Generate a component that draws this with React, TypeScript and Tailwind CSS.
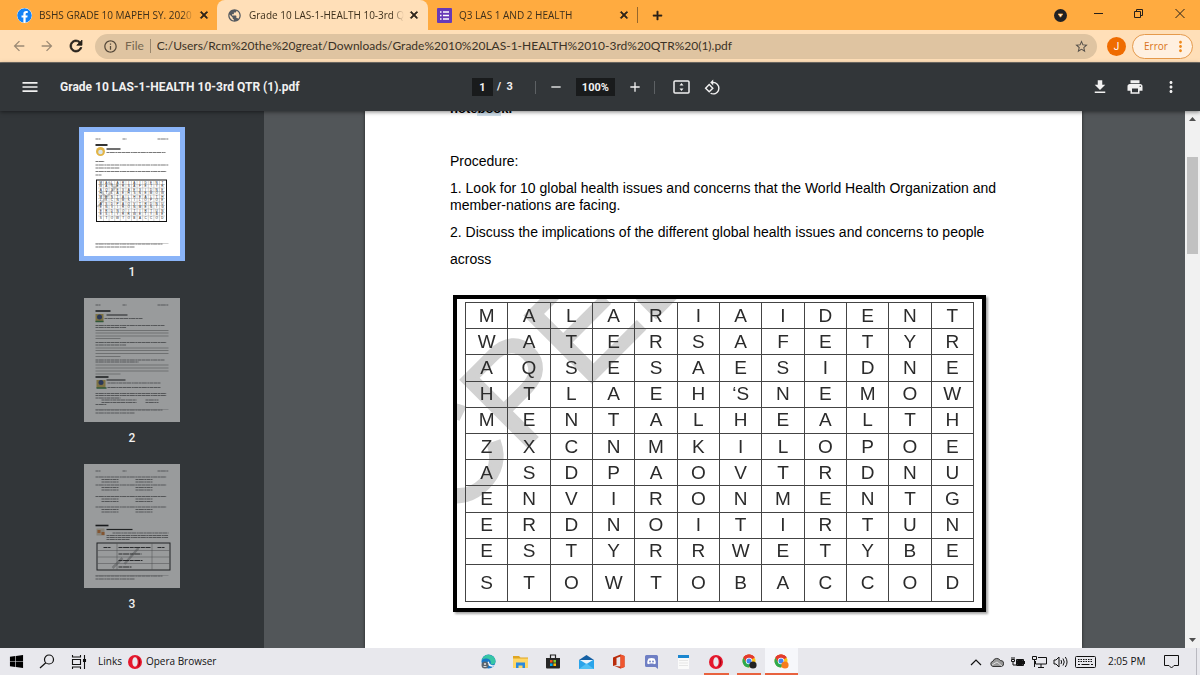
import type { ReactNode } from "react";
import {
  MdAdd,
  MdArrowBack,
  MdArrowForward,
  MdClose,
  MdInfoOutline,
  MdMenu,
  MdMoreVert,
  MdPrint,
  MdPublic,
  MdRefresh,
  MdRemove,
  MdRotate90DegreesCcw,
  MdStarBorder,
} from "react-icons/md";
import { FaFacebook, FaWindows } from "react-icons/fa";

const grid = [
  "M A L A R I A I D E N T",
  "W A T E R S A F E T Y R",
  "A Q S E S A E S I D N E",
  "H T L A E H ‘S N E M O W",
  "M E N T A L H E A L T H",
  "Z X C N M K I L O P O E",
  "A S D P A O V T R D N U",
  "E N V I R O N M E N T G",
  "E R D N O I T I R T U N",
  "E S T Y R R W E T Y B E",
  "S T O W T O B A C C O D",
].map((row) => row.split(" "));

/* ---------- browser ---------- */

function Tab({ icon, title, active, className }: { icon: ReactNode; title: string; active?: boolean; className: string }) {
  return (
    <div className={`flex items-center ${active ? "rounded-t-lg bg-[#ffdfb8]" : ""} ${className}`}>
      <button role="tab" aria-selected={!!active} className="flex min-w-0 flex-1 items-center gap-[7px] text-left">
        <span className="shrink-0">{icon}</span>
        <span className="flex-1 overflow-hidden whitespace-nowrap text-[10px] leading-[16px] text-[#3d2f1b] [mask-image:linear-gradient(to_right,black_92%,transparent)]">
          {title}
        </span>
      </button>
      <button aria-label="Close tab" className="ml-1 shrink-0 text-[#2a2118]">
        <MdClose size={12} className="[&_path:last-child]:stroke-2" />
      </button>
    </div>
  );
}

function TabStrip() {
  return (
    <div className="flex h-[30px] shrink-0 items-center bg-[#ffab40]">
      <div role="tablist" className="flex h-full">
        <Tab
          className="w-[217px] pl-[17px] pr-[7px]"
          title="BSHS GRADE 10 MAPEH SY. 2020"
          icon={<FaFacebook size={15} className="rounded-full bg-white text-[#1583f5]" />}
        />
        <Tab
          active
          className="w-[211px] pl-[10px] pr-[8px]"
          title="Grade 10 LAS-1-HEALTH 10-3rd QTR"
          icon={<MdPublic size={15} className="text-[#555a60]" />}
        />
        <Tab
          className="w-[209px] pl-[9px] pr-[7px]"
          title="Q3 LAS 1 AND 2 HEALTH"
          icon={
            <svg width="15" height="15" viewBox="0 0 15 15">
              <rect width="15" height="15" rx="1" fill="#673ab7" />
              <path d="M3 4h1.5M6 4h6M3 7.5h1.5M6 7.5h6M3 11h1.5M6 11h6" stroke="#fff" strokeWidth="1.6" />
            </svg>
          }
        />
      </div>
      <span className="h-4 w-px bg-[#96672c]" />
      <button aria-label="New tab" className="ml-3 text-[#2a2118]">
        <MdAdd size={15} className="[&_path:last-child]:stroke-1" />
      </button>
      <div className="ml-auto flex items-center pr-[15px] text-[#26201a]">
        <button aria-label="Search tabs" className="mr-[27px]">
          <svg width="13" height="13" viewBox="0 0 13 13">
            <circle cx="6.5" cy="6.5" r="6.5" fill="#202124" />
            <path d="M4.2 5h4.6L6.5 8.2z" fill="#fff" stroke="#ffab40" strokeWidth=".8" />
          </svg>
        </button>
        <button aria-label="Minimize" className="mr-[31px] h-[10px]">
          <svg width="9" height="10" viewBox="0 0 9 10">
            <path d="M0 3.5h9" stroke="currentColor" />
          </svg>
        </button>
        <button aria-label="Restore" className="mr-[31px]">
          <svg width="10" height="14" viewBox="0 0 10 14" fill="none" stroke="currentColor">
            <path d="M.5 3.5h6v6h-6zM2.5 3.5v-2h6v6h-2" />
          </svg>
        </button>
        <button aria-label="Close">
          <svg width="10" height="14" viewBox="0 0 10 14" stroke="currentColor">
            <path d="M.5 1l9 9M9.5 1l-9 9" />
          </svg>
        </button>
      </div>
    </div>
  );
}

function AddressBar() {
  return (
    <div className="flex h-[33px] shrink-0 items-center border-b border-[#77726b] bg-[#ffdfb8] pl-[11px] pr-[7px]">
      <button aria-label="Back" className="text-[#9c8a74]"><MdArrowBack size={16} /></button>
      <button aria-label="Forward" className="ml-3 text-[#9c8a74]"><MdArrowForward size={16} /></button>
      <button aria-label="Reload" className="ml-3 text-[#26201a]">
        <MdRefresh size={18} className="[&_path:last-child]:stroke-1" />
      </button>
      <div className="ml-[10px] flex h-[25px] flex-1 items-center rounded-full bg-[#dfc4a1] pl-2 pr-2">
        <MdInfoOutline size={15} className="text-[#55493a]" />
        <label htmlFor="url" className="ml-[7px] font-['Lato',sans-serif] text-[12px] text-[#76664f]">File</label>
        <span className="ml-[6px] h-[14px] w-px bg-[#9a876e]" />
        <input
          id="url"
          className="ml-[6px] min-w-0 flex-1 bg-transparent font-['Lato',sans-serif] text-[12px] text-[#3b3226] outline-none"
          defaultValue="C:/Users/Rcm%20the%20great/Downloads/Grade%2010%20LAS-1-HEALTH%2010-3rd%20QTR%20(1).pdf"
        />
        <button aria-label="Bookmark" className="text-[#55504a]"><MdStarBorder size={15} /></button>
      </div>
      <button className="ml-[10px] size-[19px] rounded-full bg-[#ef6c00] font-['Roboto',sans-serif] text-[10px] text-white">J</button>
      <button className="ml-[6px] flex h-[25px] w-[61px] items-center justify-between rounded-full border border-[#e59a4c] bg-[#fff0e0] pl-[11px] pr-[3px] text-[10px] text-[#d9731a]">
        Error
        <MdMoreVert size={17} className="text-[#ef8a1c]" />
      </button>
    </div>
  );
}

/* ---------- pdf viewer ---------- */

function PdfToolbar() {
  return (
    <header className="relative z-10 grid h-[48px] shrink-0 grid-cols-[1fr_auto_1fr] items-center bg-[#323639] pl-[20px] pr-[20px] font-['Roboto',sans-serif] text-[#f1f1f1] shadow-[0_1px_4px_rgba(0,0,0,0.5)]">
      <div className="flex items-center">
        <button aria-label="Menu"><MdMenu size={20} /></button>
        <h1 className="ml-5 whitespace-nowrap text-[12px] font-bold">Grade 10 LAS-1-HEALTH 10-3rd QTR (1).pdf</h1>
      </div>
      <div className="flex w-[256px] items-center text-[11px] font-bold">
        <input aria-label="Page" defaultValue="1" className="h-[18px] w-[21px] bg-[#191b1c] text-center outline-none" />
        <span className="ml-1 whitespace-pre">/  3</span>
        <span className="ml-[22px] h-[13px] w-px bg-[#5d6164]" />
        <button aria-label="Zoom out" className="ml-3"><MdRemove size={16} /></button>
        <input aria-label="Zoom" defaultValue="100%" className="ml-3 h-[18px] w-[39px] bg-[#191b1c] text-center outline-none" />
        <button aria-label="Zoom in" className="ml-3"><MdAdd size={16} /></button>
        <span className="ml-[11px] h-[13px] w-px bg-[#5d6164]" />
        <button aria-label="Fit to page" className="ml-[18px]">
          <svg width="17" height="14" viewBox="0 0 17 14">
            <rect x="1" y="1" width="15" height="12" rx="1" fill="none" stroke="currentColor" strokeWidth="1.5" />
            <path d="M8.5 3l2 2.4h-4zM8.5 11l2-2.4h-4z" fill="currentColor" />
          </svg>
        </button>
        <button aria-label="Rotate" className="ml-[14px]"><MdRotate90DegreesCcw size={17} /></button>
      </div>
      <div className="flex items-center justify-end">
        <button aria-label="Download">
          <svg width="18" height="18" viewBox="0 0 24 24" fill="currentColor">
            <path d="M19 9h-4V3H9v6H5l7 7 7-7zM5 18v2h14v-2H5z" />
          </svg>
        </button>
        <button aria-label="Print" className="ml-[17px]"><MdPrint size={18} /></button>
        <button aria-label="More" className="ml-[18px]"><MdMoreVert size={18} /></button>
      </div>
    </header>
  );
}

// dashes of uneven length read as words at this size
function Lines({ at, x = 11, to = 84 }: { at: number[]; x?: number; to?: number }) {
  return (
    <>
      {at.map((y) => (
        <path key={y} d={`M${x} ${y}H${to}`} stroke="#333" strokeWidth="1" strokeDasharray="3 .3 5 .5 2 .3 4 .4" opacity=".65" />
      ))}
    </>
  );
}

function PageHeader() {
  return (
    <>
      <Lines at={[7]} to={16} />
      <Lines at={[7]} x={38} to={42} />
      <Lines at={[7]} x={73} to={84} />
    </>
  );
}

function Footer() {
  return (
    <>
      <Lines at={[112]} to={78} />
      <path d="M11 111.5H84" stroke="#888" strokeWidth=".4" />
      <Lines at={[115]} to={50} />
    </>
  );
}

function ThumbOne() {
  return (
    <>
      <PageHeader />
      <path d="M11 13H23" stroke="#000" strokeWidth="1.6" />
      <circle cx="16" cy="19.5" r="4.5" fill="#e2b547" />
      <circle cx="16" cy="20" r="2.3" fill="#d7e4ec" />
      <path d="M22 17H36" stroke="#111" strokeWidth="1.2" />
      <Lines at={[20.5]} x={22} to={81} />
      <Lines at={[29.5]} to={20} />
      <Lines at={[33]} />
      <Lines at={[36]} to={35} />
      <Lines at={[39.5]} to={82} />
      <Lines at={[43]} to={17} />
      <path d="M13 75L33 53M22 66l-5-6M30 56l-6-6" stroke="#ccc" strokeWidth="2" />
      <rect x="12" y="48" width="70" height="41.5" fill="none" stroke="#111" strokeWidth="1" />
      <path
        d="M13.5 52.5h67M13.5 56h67M13.5 59.5h67M13.5 63h67M13.5 66.5h67M13.5 70h67M13.5 73.5h67M13.5 77h67M13.5 80.5h67M13.5 84h67M19 49v40M24.6 49v40M30.2 49v40M35.8 49v40M41.4 49v40M47 49v40M52.6 49v40M58.2 49v40M63.8 49v40M69.4 49v40M75 49v40"
        stroke="#999"
        strokeWidth=".4"
      />
      <g fontSize="3" fill="#111" textAnchor="middle" fontFamily="Liberation Sans">
        {grid.map((row, r) => row.map((c, i) => (
          <text key={`${r}-${i}`} x={16.2 + i * 5.6} y={51.7 + r * 3.52}>{c}</text>
        )))}
      </g>
      <Footer />
    </>
  );
}

function ThumbTwo() {
  return (
    <>
      <PageHeader />
      <path d="M11 13H26M11 79H24" stroke="#000" strokeWidth="1.6" />
      <rect x="11" y="16" width="8" height="8" fill="#c9ae4e" />
      <circle cx="15" cy="19" r="2.5" fill="#253b78" />
      <path d="M11 23.5h8" stroke="#2e7a3c" strokeWidth="1.5" />
      <path d="M22 17H43M22 82H41" stroke="#111" strokeWidth="1.2" />
      <Lines at={[20.5]} x={20} to={58} />
      <Lines at={[27.5]} to={80} />
      <Lines at={[29.5]} to={42} />
      <Lines at={[44.5]} to={82} />
      <Lines at={[47]} to={42} />
      <Lines at={[62]} to={80} />
      <Lines at={[64]} to={54} />
      <path d="M11 32.5H84M11 35H84M11 38H84M11 40.5H36M11 50H84M11 52.5H84M11 55.5H84M11 58.5H36M11 67H84M11 70H84M11 73H84M11 76H36" stroke="#555" strokeWidth=".5" />
      <rect x="12" y="82" width="9" height="8" fill="#c9ae4e" />
      <circle cx="16.5" cy="84.5" r="2.5" fill="#253b78" />
      <path d="M12 90h10" stroke="#2e7a3c" strokeWidth="1.5" />
      <Lines at={[85, 89.5]} x={23} to={76} />
      <Lines at={[95.5, 97.5]} to={82} />
      <Lines at={[100]} to={36} />
      <Lines at={[102, 104.5]} x={17} to={52} />
      <Lines at={[102, 104.5]} x={61} to={74} />
      <Lines at={[106.5]} to={22} />
      <Footer />
    </>
  );
}

function ThumbThree() {
  return (
    <>
      <PageHeader />
      {[13, 21, 32.5, 43].map((y) => (
        <g key={y}>
          <Lines at={[y]} to={82} />
          <Lines at={[y + 2.5, y + 5]} x={17} to={34} />
          <Lines at={[y + 2.5, y + 5]} x={51} to={68} />
        </g>
      ))}
      <path d="M11 61.5H24" stroke="#000" strokeWidth="1.6" />
      <rect x="12" y="64.5" width="8" height="7" fill="#d9cdb8" />
      <path d="M13 66h3v3h-3zM17 68h3v3h-3z" fill="#d4742c" />
      <path d="M22 65.5H48" stroke="#111" strokeWidth="1.2" />
      <Lines at={[69]} x={28} />
      <Lines at={[71.5, 73.5]} x={22} />
      <Lines at={[75.5]} x={22} to={45} />
      <path d="M28 104L38 94M40 100l14-16" stroke="#bbb" strokeWidth="2.5" />
      <rect x="12.5" y="79" width="73" height="27" fill="none" stroke="#111" />
      <path d="M13 86.5h72M13 93h72M13 99.5h72M32.5 79v27M67.5 79v27" stroke="#666" strokeWidth=".5" />
      <path d="M19 83.5h7M34 83.5h32M73 83.5h7M34 90h23M34 96.5h24M34 103h13" stroke="#222" strokeWidth="1.2" strokeDasharray="4 .6 6 .6" />
      <Footer />
    </>
  );
}

const thumbs = [<ThumbOne />, <ThumbTwo />, <ThumbThree />];

function Sidebar() {
  return (
    <nav aria-label="Pages" className="flex w-[22%] shrink-0 flex-col items-center gap-[10px] bg-[#323639] pt-4">
      {thumbs.map((thumb, i) => (
        <button key={i} className="flex flex-col items-center">
          <span className={`block p-[5px] ${i === 0 ? "bg-[#8ab4f8]" : ""}`}>
            <svg width="96" height="124" viewBox="0 0 95 124" className={`block bg-white ${i === 0 ? "" : "opacity-50"}`}>
              {thumb}
            </svg>
          </span>
          <span className="font-['Roboto',sans-serif] text-[12px] font-medium leading-[22px] text-[#f1f1f1]">{i + 1}</span>
        </button>
      ))}
    </nav>
  );
}

function Puzzle() {
  return (
    <div className="relative ml-[3px] mt-[22px] w-[533px] overflow-hidden border-4 border-black bg-white px-2 pb-[6px] pt-[3px]">
      <svg className="absolute inset-0 size-full" viewBox="0 0 524 308" preserveAspectRatio="xMinYMin slice" aria-hidden="true">
        <text
          transform="translate(-7 224) rotate(-45)"
          fontSize="136"
          fontFamily="Liberation Sans"
          fill="#d2d2d2"
          stroke="#d2d2d2"
          strokeWidth="3"
        >
          CPEL
        </text>
      </svg>
      <table className="relative h-[300px] w-full table-fixed border-collapse text-center text-[19px] leading-[20px] text-[#2b2b2b]">
        <tbody>
          {grid.map((row, r) => (
            <tr key={r} className={r === grid.length - 1 ? "h-[37px]" : ""}>
              {row.map((c, i) => (
                <td key={i} className="border border-[#444] p-0">{c}</td>
              ))}
            </tr>
          ))}
        </tbody>
      </table>
    </div>
  );
}

function Page() {
  return (
    <article className="w-[717px] bg-white px-[85px] font-['Liberation_Sans',Arial,sans-serif] text-[14px] text-black shadow-[0_0_3px_rgba(0,0,0,0.6)]">
      <p className="-mt-[11px] h-[17px] text-[13px] font-bold leading-[17px]">
        note<span className="bg-[#cfdfea]">boo</span>k.
      </p>
      <p className="mt-[36px] leading-[17px]">Procedure:</p>
      <p className="mt-[10px] whitespace-nowrap leading-[17px]">
        1. Look for 10 global health issues and concerns that the World Health Organization and
        <br />
        member-nations are facing.
      </p>
      <p className="mt-[5px] whitespace-nowrap leading-[27px]">
        2. Discuss the implications of the different global health issues and concerns to people
        <br />
        across
      </p>
      <div className="w-fit drop-shadow-[2px_2px_1px_rgba(0,0,0,0.35)]">
        <Puzzle />
      </div>
    </article>
  );
}

function Scrollbar() {
  return (
    <div className="flex w-[15px] shrink-0 flex-col items-center bg-[#f1f1f1] text-[#505050]" aria-hidden="true">
      <svg width="7" height="16" viewBox="0 0 7 16"><path d="M0 10l3.5-4L7 10z" fill="currentColor" /></svg>
      <div className="mt-[30px] h-[97px] w-[11px] bg-[#c1c1c1]" />
      <svg className="mt-auto" width="7" height="16" viewBox="0 0 7 16"><path d="M0 6l3.5 4L7 6z" fill="currentColor" /></svg>
    </div>
  );
}

/* ---------- taskbar ---------- */

function Opera() {
  return (
    <svg width="14" height="14" viewBox="0 0 14 14">
      <path fillRule="evenodd" d="M7 0a7 7 0 100 14A7 7 0 007 0zm0 2.3c1.7 0 2.7 2.1 2.7 4.7S8.7 11.7 7 11.7 4.3 9.6 4.3 7 5.3 2.3 7 2.3z" fill="#e5182d" />
      <path d="M9 1.5c2 1 3.3 3 3.3 5.5S11 11.5 9 12.5c1.3-1 2-3 2-5.5s-.7-4.5-2-5.5z" fill="#a70014" />
    </svg>
  );
}

function Chrome({ badge }: { badge: string }) {
  return (
    <svg width="15" height="15" viewBox="0 0 15 15">
      <circle cx="7" cy="7" r="6.5" fill="#fbc116" />
      <path d="M7 7L1.4 3.7A6.5 6.5 0 0112.6 3.7z" fill="#e33b2e" />
      <path d="M7 3.7h5.6A6.5 6.5 0 001.4 3.7L4.3 8.5z" fill="#e33b2e" />
      <path d="M1.4 3.7A6.5 6.5 0 007 13.5L9.8 8.6 4.2 8.5z" fill="#2da94f" />
      <circle cx="7" cy="7" r="3.2" fill="#fff" />
      <circle cx="7" cy="7" r="2.5" fill="#4285f4" />
      <circle cx="11" cy="11" r="3.6" fill={badge} />
    </svg>
  );
}

const apps: { name: string; icon: ReactNode; state?: "open" | "active" }[] = [
  {
    name: "Microsoft Edge",
    icon: (
      <svg width="15" height="15" viewBox="0 0 15 15">
        <circle cx="7.5" cy="7.5" r="7" fill="#1677c8" />
        <path d="M.6 6.5A7 7 0 0114.5 7.5c0 2.2-1.6 3.2-3.5 3-2-.2-1.2-1-1.2-2.2C9.8 6 7 4.3 4.5 4.6 2.5 4.8 1.2 5.5.6 6.5z" fill="#37c6a5" />
        <path d="M6.5 8c-.5 2.5 1.5 5 5.5 4.7l2-2C11.5 12 8.5 11 7.8 7.5z" fill="#f2f8fc" />
        <circle cx="4" cy="11" r="3.5" fill="#5b6570" />
        <circle cx="4" cy="10" r="1.1" fill="#ddd" />
        <path d="M2 13c.5-1.5 3.5-1.5 4 0z" fill="#ddd" />
      </svg>
    ),
  },
  {
    name: "File Explorer",
    icon: (
      <svg width="15" height="14" viewBox="0 0 15 14">
        <path d="M0 1h6l1.5 1.5H15V5H0z" fill="#e0a623" />
        <path d="M0 3.5h15V13H0z" fill="#ffd766" />
        <path d="M3 13V7.5h9V13H9.5v-2.5h-4V13z" fill="#2b8ade" />
      </svg>
    ),
  },
  {
    name: "Microsoft Store",
    icon: (
      <svg width="14" height="15" viewBox="0 0 14 15">
        <path d="M4.5 4V1h5v3" fill="none" stroke="#222" strokeWidth="1.2" />
        <path d="M0 4h14v9.5q0 1-1 1H1q-1 0-1-1z" fill="#262626" />
        <path d="M4 6h2.6v2.6H4z" fill="#f1511b" />
        <path d="M7.4 6H10v2.6H7.4z" fill="#80cc28" />
        <path d="M4 9.4h2.6V12H4z" fill="#00adef" />
        <path d="M7.4 9.4H10V12H7.4z" fill="#fbbc09" />
      </svg>
    ),
  },
  {
    name: "Mail",
    icon: (
      <svg width="15" height="14" viewBox="0 0 15 14">
        <path d="M0 5l7.5-5L15 5v1H0z" fill="#1560a4" />
        <path d="M0 5h15v9H0z" fill="#2aa4ea" />
        <path d="M1 5h13L7.5 9z" fill="#e9f4fc" />
        <path d="M0 14l7.5-5.5L15 14z" fill="#50c0f5" />
      </svg>
    ),
  },
  {
    name: "Office",
    icon: (
      <svg width="12" height="15" viewBox="0 0 12 15">
        <path d="M0 3.5L7.5.5 11.5 2v11l-4 1.5L1.5 12l6 .5v-10L3.5 4v7L0 12z" fill="#b92b0a" />
        <path d="M7.5.5l4 1.5v11l-4 1.5z" fill="#f0562f" />
      </svg>
    ),
  },
  {
    name: "Discord",
    icon: (
      <svg width="13" height="14" viewBox="0 0 13 14">
        <path d="M1.5 0h10Q13 0 13 1.5V14l-2.5-2h-9Q0 12 0 10.5v-9Q0 0 1.5 0z" fill="#6f7fc4" />
        <path d="M3.5 3.5q3-1 6 0Q11 6 10.8 8.5L9 9.3 8.3 8.5H4.7L4 9.3 2.2 8.5Q2 6 3.5 3.5z" fill="#fff" />
        <circle cx="5" cy="6.5" r=".9" fill="#6f7fc4" />
        <circle cx="8" cy="6.5" r=".9" fill="#6f7fc4" />
      </svg>
    ),
  },
  {
    name: "Notepad",
    icon: (
      <svg width="11" height="14" viewBox="0 0 11 14">
        <path d="M0 0h11v14H0z" fill="#fafafa" />
        <path d="M0 0h11v3H0z" fill="#1b86cf" />
        <path d="M1 5.5h9M1 8h9M1 10.5h9" stroke="#dcdcdc" strokeWidth=".7" />
      </svg>
    ),
  },
  { name: "Opera", icon: <Opera />, state: "open" },
  { name: "Chrome, first profile", icon: <Chrome badge="#222" />, state: "open" },
  { name: "Chrome", icon: <Chrome badge="#f57c1f" />, state: "active" },
];

const appState = {
  open: "mx-1 border-b-2 border-[#e8623f] pt-[2px]",
  active: "border-b-2 border-[#e8623f] bg-[#f6f7fb] pt-[2px]",
};

function Taskbar() {
  return (
    <footer className="flex h-[27px] shrink-0 items-center bg-[#e8e8ed] text-[10px] text-[#111]">
      <div className="flex w-[39%] shrink-0 items-center pl-[9px]">
        <button aria-label="Start"><FaWindows size={15} className="text-black" /></button>
        <button aria-label="Search" className="ml-[15px]">
          <svg width="16" height="15" viewBox="0 0 16 15" fill="none" stroke="#111" strokeWidth="1.2">
            <circle cx="10" cy="5.5" r="4.5" />
            <path d="M6.8 8.7L1 14" />
          </svg>
        </button>
        <button aria-label="Task view" className="ml-4">
          <svg width="16" height="14" viewBox="0 0 16 14" fill="none" stroke="#111" strokeWidth="1.1">
            <path d="M1.5 4.5h8v5h-8zM1.5 0v2h8V0M1.5 14v-2h8v2M13.5 0v14" />
            <path d="M12.5 4.5h2v2h-2z" fill="#111" />
          </svg>
        </button>
        <span className="ml-[11px]">Links</span>
        <a href="#opera" className="ml-[6px] flex items-center gap-1"><Opera /> Opera Browser</a>
      </div>
      <div className="grid h-full w-[330px] shrink-0 grid-cols-10 pl-1">
        {apps.map((app) => (
          <button
            key={app.name}
            aria-label={app.name}
            className={`flex items-center justify-center ${app.state ? appState[app.state] : ""}`}
          >
            {app.icon}
          </button>
        ))}
      </div>
      <div className="ml-auto flex h-full items-center text-[#111]">
        <svg width="12" height="8" viewBox="0 0 12 8" fill="none" stroke="currentColor" strokeWidth="1.2"><path d="M1 7l5-5 5 5" /></svg>
        <svg className="ml-2" width="14" height="10" viewBox="0 0 14 10">
          <path d="M3 9.5A2.7 2.7 0 013 4.2 4 4 0 0110.3 3.5 3 3 0 0111 9.5z" fill="#999" stroke="#333" />
          <path d="M2 8l5-3 5 4" fill="none" stroke="#ddd" />
        </svg>
        <svg className="ml-[7px]" width="14" height="12" viewBox="0 0 14 12" fill="none" stroke="currentColor">
          <path d="M5.5 3.5h7v6h-7z" />
          <path d="M6.5 4.5h5v4h-5z" fill="#111" />
          <path d="M13.5 5v3M1 1v2M3 1v2M.5 3.5h3v2h-3zM2 6v3h3" />
        </svg>
        <svg className="ml-[7px]" width="15" height="12" viewBox="0 0 15 12" fill="none" stroke="currentColor">
          <path d="M6 1.5h8.5v6.5H3.5V5M9 8v3M6 11.5h6" />
          <path d="M.5.5h4v3h-4zM2.5 4v7" />
        </svg>
        <svg className="ml-[6px]" width="16" height="12" viewBox="0 0 16 12" fill="none" stroke="currentColor">
          <path d="M1 4h2l3-3v10L3 8H1zM8 4q1.2 2 0 4M10 2.5q2.5 3.5 0 7M12.3 1q3.5 5 0 10" />
        </svg>
        <svg className="ml-[6px]" width="21" height="12" viewBox="0 0 21 12" fill="none" stroke="currentColor">
          <rect x=".5" y=".5" width="20" height="11" rx="1" />
          <path d="M3 3.5h15M3 5.5h15" strokeDasharray="1.5 1" />
          <path d="M3 8.5h2M6.5 8.5h8M16 8.5h2" />
        </svg>
        <time className="ml-3 w-[50px] whitespace-nowrap">2:05 PM</time>
        <button aria-label="Notifications" className="ml-[6px]">
          <svg width="15" height="14" viewBox="0 0 15 14" fill="none" stroke="currentColor"><path d="M.5.5h14v10H10L7.5 13 5 10.5H.5z" /></svg>
        </button>
        <span className="ml-[17px] h-full w-px bg-[#b9b9c0]" />
        <span className="w-[3px]" />
      </div>
    </footer>
  );
}

export default function App() {
  return (
    <div className="flex h-screen flex-col overflow-hidden font-['Open_Sans','Noto_Sans',sans-serif]">
      <TabStrip />
      <AddressBar />
      <PdfToolbar />
      <div className="flex min-h-0 flex-1">
        <Sidebar />
        <main className="flex min-w-0 flex-1 justify-center overflow-hidden bg-[#525659] pr-0.5">
          <Page />
        </main>
        <Scrollbar />
      </div>
      <Taskbar />
    </div>
  );
}
